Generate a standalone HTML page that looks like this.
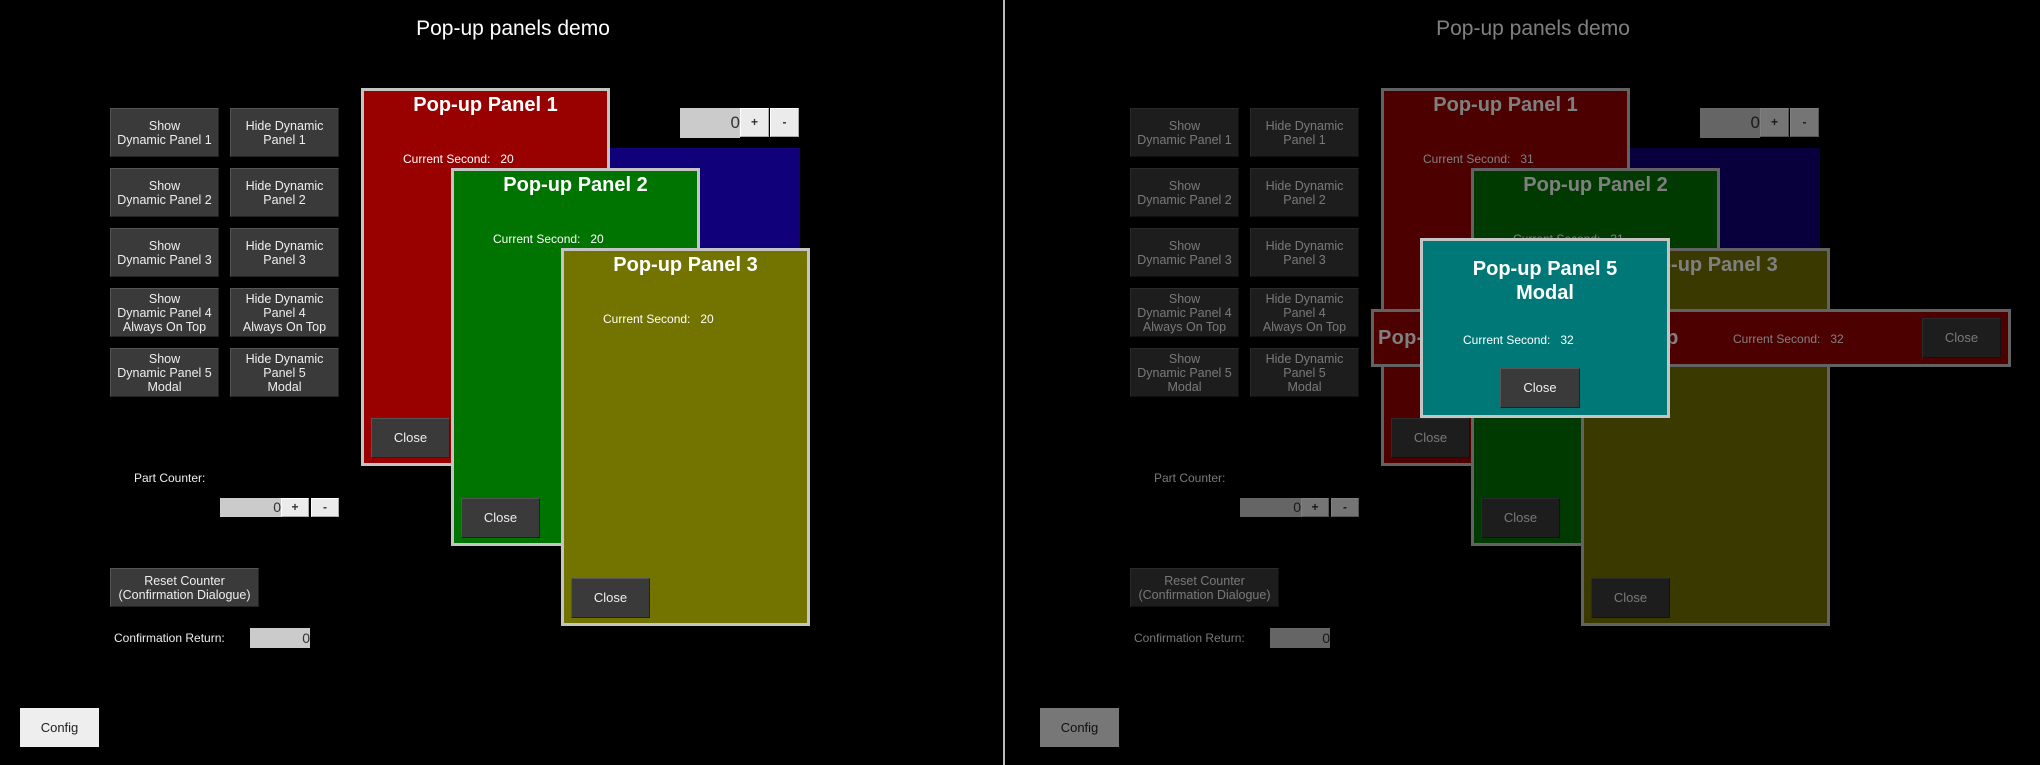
<!DOCTYPE html>
<html><head><meta charset="utf-8"><style>
*{margin:0;padding:0;box-sizing:border-box}
body{width:2040px;height:765px;background:#000;position:relative;overflow:hidden;font-family:"Liberation Sans",sans-serif;color:#eee}
.half{position:absolute;top:0;width:1020px;height:765px}
.a{position:absolute}
.title{position:absolute;left:0;width:1026px;top:17px;text-align:center;font-size:21px;color:#fff}
.btn{position:absolute;background:#3a3a3a;border:1px solid #555;border-right-color:#222;border-bottom-color:#222;color:#eee;font-size:12.5px;line-height:14px;text-align:center;display:flex;align-items:center;justify-content:center}
.pnl{position:absolute;border:3px solid #c4c4c4}
.pt{position:absolute;left:0;width:100%;text-align:center;font-weight:bold;font-size:20px;color:#fff}
.cs{position:absolute;font-size:12px;color:#fff;white-space:pre}
.fld{position:absolute;background:#cbcbcb;color:#333;text-align:right;font-size:17px}
.pm{position:absolute;background:#ebebeb;color:#333;text-align:center;font-size:12px;font-weight:bold;border:1px solid #aaa;border-top-color:#fff;border-left-color:#fff}
.lbl{position:absolute;font-size:12px;color:#eee}
.ov{position:absolute;left:0;top:0;width:1020px;height:765px;background:rgba(0,0,0,0.5)}
</style></head><body>

<div class="a" style="left:1003px;top:0;width:2px;height:765px;background:#bbb"></div>

<!-- LEFT -->
<div class="half" style="left:0">
<div class="title">Pop-up panels demo</div>
<div class="btn" style="left:110px;top:108px;width:109px;height:49px">Show<br>Dynamic Panel 1</div>
<div class="btn" style="left:230px;top:108px;width:109px;height:49px">Hide Dynamic<br>Panel 1</div>
<div class="btn" style="left:110px;top:168px;width:109px;height:49px">Show<br>Dynamic Panel 2</div>
<div class="btn" style="left:230px;top:168px;width:109px;height:49px">Hide Dynamic<br>Panel 2</div>
<div class="btn" style="left:110px;top:228px;width:109px;height:49px">Show<br>Dynamic Panel 3</div>
<div class="btn" style="left:230px;top:228px;width:109px;height:49px">Hide Dynamic<br>Panel 3</div>
<div class="btn" style="left:110px;top:288px;width:109px;height:49px">Show<br>Dynamic Panel 4<br>Always On Top</div>
<div class="btn" style="left:230px;top:288px;width:109px;height:49px">Hide Dynamic<br>Panel 4<br>Always On Top</div>
<div class="btn" style="left:110px;top:348px;width:109px;height:49px">Show<br>Dynamic Panel 5<br>Modal</div>
<div class="btn" style="left:230px;top:348px;width:109px;height:49px">Hide Dynamic<br>Panel 5<br>Modal</div>

<div class="fld" style="left:680px;top:108px;width:60px;height:30px;line-height:30px">0</div>
<div class="pm" style="left:740px;top:108px;width:29px;height:29px;line-height:27px">+</div>
<div class="pm" style="left:770px;top:108px;width:29px;height:29px;line-height:27px">-</div>

<div class="a" style="left:609px;top:148px;width:191px;height:190px;background:#10007a"></div>

<div class="pnl" style="left:361px;top:88px;width:249px;height:378px;background:#990000">
 <div class="pt" style="top:3px">Pop-up Panel 1</div>
 <div class="cs" style="left:39px;top:61px">Current Second:   20</div>
 <div class="btn" style="left:7px;top:327px;width:79px;height:40px;font-size:13px">Close</div>
</div>
<div class="pnl" style="left:451px;top:168px;width:249px;height:378px;background:#007400">
 <div class="pt" style="top:3px">Pop-up Panel 2</div>
 <div class="cs" style="left:39px;top:61px">Current Second:   20</div>
 <div class="btn" style="left:7px;top:327px;width:79px;height:40px;font-size:13px">Close</div>
</div>
<div class="pnl" style="left:561px;top:248px;width:249px;height:378px;background:#737300">
 <div class="pt" style="top:3px">Pop-up Panel 3</div>
 <div class="cs" style="left:39px;top:61px">Current Second:   20</div>
 <div class="btn" style="left:7px;top:327px;width:79px;height:40px;font-size:13px">Close</div>
</div>

<div class="lbl" style="left:134px;top:471px">Part Counter:</div>
<div class="fld" style="left:220px;top:498px;width:61px;height:19px;line-height:19px;font-size:14px">0</div>
<div class="pm" style="left:281px;top:498px;width:28px;height:19px;line-height:17px">+</div>
<div class="pm" style="left:311px;top:498px;width:28px;height:19px;line-height:17px">-</div>
<div class="btn" style="left:110px;top:568px;width:149px;height:39px">Reset Counter<br>(Confirmation Dialogue)</div>
<div class="lbl" style="left:114px;top:631px">Confirmation Return:</div>
<div class="fld" style="left:250px;top:628px;width:60px;height:20px;line-height:20px;font-size:14px">0</div>
<div class="a" style="left:20px;top:708px;width:79px;height:39px;background:#eee;color:#222;font-size:13px;text-align:center;line-height:39px">Config</div>
</div>

<!-- RIGHT -->
<div class="half" style="left:1020px">
<div class="title">Pop-up panels demo</div>
<div class="btn" style="left:110px;top:108px;width:109px;height:49px">Show<br>Dynamic Panel 1</div>
<div class="btn" style="left:230px;top:108px;width:109px;height:49px">Hide Dynamic<br>Panel 1</div>
<div class="btn" style="left:110px;top:168px;width:109px;height:49px">Show<br>Dynamic Panel 2</div>
<div class="btn" style="left:230px;top:168px;width:109px;height:49px">Hide Dynamic<br>Panel 2</div>
<div class="btn" style="left:110px;top:228px;width:109px;height:49px">Show<br>Dynamic Panel 3</div>
<div class="btn" style="left:230px;top:228px;width:109px;height:49px">Hide Dynamic<br>Panel 3</div>
<div class="btn" style="left:110px;top:288px;width:109px;height:49px">Show<br>Dynamic Panel 4<br>Always On Top</div>
<div class="btn" style="left:230px;top:288px;width:109px;height:49px">Hide Dynamic<br>Panel 4<br>Always On Top</div>
<div class="btn" style="left:110px;top:348px;width:109px;height:49px">Show<br>Dynamic Panel 5<br>Modal</div>
<div class="btn" style="left:230px;top:348px;width:109px;height:49px">Hide Dynamic<br>Panel 5<br>Modal</div>

<div class="fld" style="left:680px;top:108px;width:60px;height:30px;line-height:30px">0</div>
<div class="pm" style="left:740px;top:108px;width:29px;height:29px;line-height:27px">+</div>
<div class="pm" style="left:770px;top:108px;width:29px;height:29px;line-height:27px">-</div>

<div class="a" style="left:609px;top:148px;width:191px;height:190px;background:#10007a"></div>

<div class="pnl" style="left:361px;top:88px;width:249px;height:378px;background:#990000">
 <div class="pt" style="top:3px">Pop-up Panel 1</div>
 <div class="cs" style="left:39px;top:61px">Current Second:   31</div>
 <div class="btn" style="left:7px;top:327px;width:79px;height:40px;font-size:13px">Close</div>
</div>
<div class="pnl" style="left:451px;top:168px;width:249px;height:378px;background:#007400">
 <div class="pt" style="top:3px">Pop-up Panel 2</div>
 <div class="cs" style="left:39px;top:61px">Current Second:   31</div>
 <div class="btn" style="left:7px;top:327px;width:79px;height:40px;font-size:13px">Close</div>
</div>
<div class="pnl" style="left:561px;top:248px;width:249px;height:378px;background:#737300">
 <div class="pt" style="top:3px">Pop-up Panel 3</div>
 <div class="cs" style="left:39px;top:61px">Current Second:   31</div>
 <div class="btn" style="left:7px;top:327px;width:79px;height:40px;font-size:13px">Close</div>
</div>
<div class="pnl" style="left:351px;top:309px;width:640px;height:58px;background:#990000">
 <div class="a" style="left:4px;top:15px;font-size:20px;letter-spacing:0.3px;font-weight:bold;color:#fff;white-space:nowrap">Pop-up Panel 4 Always On Top</div>
 <div class="cs" style="left:359px;top:20px">Current Second:   32</div>
 <div class="btn" style="left:548px;top:6px;width:79px;height:40px;font-size:13px">Close</div>
</div>

<div class="lbl" style="left:134px;top:471px">Part Counter:</div>
<div class="fld" style="left:220px;top:498px;width:61px;height:19px;line-height:19px;font-size:14px">0</div>
<div class="pm" style="left:281px;top:498px;width:28px;height:19px;line-height:17px">+</div>
<div class="pm" style="left:311px;top:498px;width:28px;height:19px;line-height:17px">-</div>
<div class="btn" style="left:110px;top:568px;width:149px;height:39px">Reset Counter<br>(Confirmation Dialogue)</div>
<div class="lbl" style="left:114px;top:631px">Confirmation Return:</div>
<div class="fld" style="left:250px;top:628px;width:60px;height:20px;line-height:20px;font-size:14px">0</div>
<div class="a" style="left:20px;top:708px;width:79px;height:39px;background:#eee;color:#222;font-size:13px;text-align:center;line-height:39px">Config</div>

<div class="ov"></div>

<div class="pnl" style="left:400px;top:238px;width:250px;height:180px;background:#007878">
 <div class="pt" style="top:16px;line-height:24px;font-size:20px">Pop-up Panel 5<br>Modal</div>
 <div class="cs" style="left:40px;top:92px">Current Second:   32</div>
 <div class="btn" style="left:77px;top:127px;width:80px;height:40px;font-size:13px">Close</div>
</div>
</div>
</body></html>
